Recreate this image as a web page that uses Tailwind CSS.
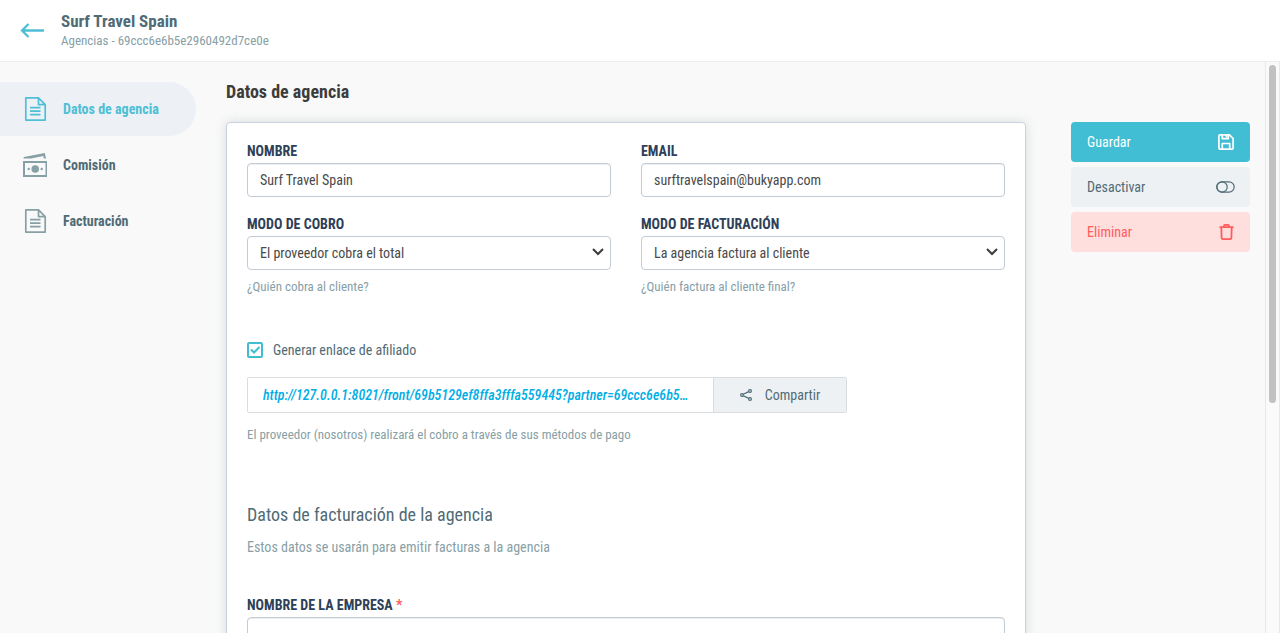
<!DOCTYPE html>
<html lang="es">
<head>
<meta charset="utf-8">
<meta name="viewport" content="width=device-width, initial-scale=1">
<title>Surf Travel Spain</title>
<script src="https://cdn.jsdelivr.net/npm/@tailwindcss/browser@4"></script>
</head>
<body class="flex h-screen flex-col overflow-hidden bg-[#f9f9f9] font-['Roboto_Condensed','Liberation_Sans_Narrow','Roboto',sans-serif] text-sm text-[#506b75]">
<header class="flex shrink-0 items-center gap-4 border-b border-[#ebedef] bg-white px-5 pt-[11px] pb-[10px]">
  <a href="#" aria-label="Volver">
    <svg class="h-6 w-[25px] text-[#4fbfd5]" viewBox="0 0 25 24" fill="none" stroke="currentColor" stroke-width="2.3"><path d="M24 11.500H2M8.500 5L2 11.500l6.500 6.500"/></svg>
  </a>
  <div>
    <h1 class="text-[17px] leading-5 font-bold">Surf Travel Spain</h1>
    <p class="text-[13px] leading-5 text-[#87a0a6]">Agencias - 69ccc6e6b5e2960492d7ce0e</p>
  </div>
</header>
<div class="flex min-h-0 flex-1">
  <nav class="flex w-[196px] shrink-0 flex-col gap-[2px] pt-5 font-bold">
    <a href="#" class="flex h-[54px] items-center gap-4 rounded-r-full bg-[#edf1f5] pl-[23px] text-[#4fbfd5]">
      <svg class="h-6 w-6" viewBox="0 0 24 24" fill="none" stroke="currentColor" stroke-width="1.700" stroke-linejoin="round"><path d="M2.800.9h12.700l6.700 6.700v15.500H2.800zM15.500.9v6.700h6.700M7 10.700h10.500M7 14.200h10.500M7 17.700h10.500"/></svg>
      Datos de agencia
    </a>
    <a href="#" class="flex h-[54px] items-center gap-4 pl-[23px]">
      <svg class="h-6 w-6 text-[#87a0a6]" viewBox="0 0 24 24" fill="none" stroke="currentColor"><path stroke-width="2" d="M1 9h22.500v14H1z"/><circle cx="12.200" cy="16" r="3.800" fill="currentColor" stroke="none"/><circle cx="5.700" cy="16" r="1.200" fill="currentColor" stroke="none"/><circle cx="18.700" cy="16" r="1.200" fill="currentColor" stroke="none"/><path fill="currentColor" stroke="none" d="M.3 5.400L1 4 21.800 0l1.200 5.400h-2.200l-.5-2.400L8 5.400z"/></svg>
      Comisión
    </a>
    <a href="#" class="flex h-[54px] items-center gap-4 pl-[23px]">
      <svg class="h-6 w-6 text-[#87a0a6]" viewBox="0 0 24 24" fill="none" stroke="currentColor" stroke-width="1.700" stroke-linejoin="round"><path d="M2.800.9h12.700l6.700 6.700v15.500H2.800zM15.500.9v6.700h6.700M7 10.700h10.500M7 14.200h10.500M7 17.700h10.500"/></svg>
      Facturación
    </a>
  </nav>
  <main class="flex min-w-0 flex-1 items-start gap-[45px] pt-5 pr-[15px] pl-[30px]">
    <section class="min-w-0 flex-1">
      <h2 class="mb-5 text-lg leading-5 font-bold text-[#3c3c3b]">Datos de agencia</h2>
      <form class="rounded border border-[#c8d3df] bg-white p-5 shadow-[0_0_12px_rgba(84,110,122,0.2)]">
        <div class="grid grid-cols-2 gap-x-[30px] gap-y-[19px]">
          <div>
            <label for="nombre" class="mb-1 block leading-4 font-bold text-[#2e4057]">NOMBRE</label>
            <input id="nombre" type="text" value="Surf Travel Spain" class="block h-[34px] w-full rounded border border-[#c3ccd5] bg-white px-3 text-[#4a4a4a] shadow-[inset_0_1px_1px_rgba(0,0,0,0.07)]">
          </div>
          <div>
            <label for="email" class="mb-1 block leading-4 font-bold text-[#2e4057]">EMAIL</label>
            <input id="email" type="email" value="surftravelspain@bukyapp.com" class="block h-[34px] w-full rounded border border-[#c3ccd5] bg-white px-3 text-[#4a4a4a] shadow-[inset_0_1px_1px_rgba(0,0,0,0.07)]">
          </div>
          <div>
            <label for="cobro" class="mb-1 block leading-4 font-bold text-[#2e4057]">MODO DE COBRO</label>
            <div class="relative">
              <select id="cobro" class="block h-[34px] w-full appearance-none rounded border border-[#c3ccd5] bg-white px-3 text-[#4a4a4a]"><option>El proveedor cobra el total</option></select>
              <svg class="pointer-events-none absolute top-3 right-[7px] h-2 w-3" viewBox="0 0 12 8" fill="none" stroke="#3c3c3b" stroke-width="2"><path d="M1 1l5 5 5-5"/></svg>
            </div>
            <p class="mt-2 text-[13px] leading-[18px] text-[#87a0a6]">¿Quién cobra al cliente?</p>
          </div>
          <div>
            <label for="facturacion" class="mb-1 block leading-4 font-bold text-[#2e4057]">MODO DE FACTURACIÓN</label>
            <div class="relative">
              <select id="facturacion" class="block h-[34px] w-full appearance-none rounded border border-[#c3ccd5] bg-white px-3 text-[#4a4a4a]"><option>La agencia factura al cliente</option></select>
              <svg class="pointer-events-none absolute top-3 right-[7px] h-2 w-3" viewBox="0 0 12 8" fill="none" stroke="#3c3c3b" stroke-width="2"><path d="M1 1l5 5 5-5"/></svg>
            </div>
            <p class="mt-2 text-[13px] leading-[18px] text-[#87a0a6]">¿Quién factura al cliente final?</p>
          </div>
        </div>
        <label for="afiliado" class="mt-11 flex items-center gap-[10px] leading-5">
          <span class="relative size-4">
            <input id="afiliado" type="checkbox" checked class="block size-4 appearance-none rounded-xs border-2 border-[#3fbed3] bg-white">
            <svg class="pointer-events-none absolute inset-0 size-4" viewBox="0 0 16 16" fill="none" stroke="#3fbed3" stroke-width="2"><path d="M4 7.500l3 3 5.500-5.500"/></svg>
          </span>
          Generar enlace de afiliado
        </label>
        <div class="mt-[17px] flex h-9 max-w-[600px] overflow-hidden rounded-xs border border-[#dadcde]">
          <div class="flex min-w-0 flex-1 items-center px-[15px]"><a href="#" class="truncate font-medium text-[#00aee6] italic">http://127.0.0.1:8021/front/69b5129ef8ffa3fffa559445?partner=69ccc6e6b5…</a></div>
          <button type="button" class="flex w-[133px] shrink-0 items-center justify-center gap-[13px] border-l border-[#dadcde] bg-[#edf1f4]">
            <svg class="h-3 w-3" viewBox="0 0 12 12" fill="none" stroke="currentColor" stroke-width="1.200"><circle cx="2" cy="6" r="1.400"/><circle cx="10" cy="2" r="1.400"/><circle cx="10" cy="10" r="1.400"/><path d="M3.300 5.300l5.400-2.700M3.300 6.700l5.400 2.700"/></svg>
            Compartir
          </button>
        </div>
        <p class="mt-3 text-[13px] leading-5 text-[#87a0a6]">El proveedor (nosotros) realizará el cobro a través de sus métodos de pago</p>
        <h3 class="mt-[58px] text-lg leading-6">Datos de facturación de la agencia</h3>
        <p class="mt-[10px] leading-5 text-[#87a0a6]">Estos datos se usarán para emitir facturas a la agencia</p>
        <label for="empresa" class="mt-10 mb-1 block leading-4 font-bold text-[#2e4057]">NOMBRE DE LA EMPRESA <span class="text-[#ff5c5c]">*</span></label>
        <input id="empresa" type="text" required class="block h-[34px] w-full rounded border border-[#c3ccd5] bg-white px-3 text-[#4a4a4a] shadow-[inset_0_1px_1px_rgba(0,0,0,0.07)]">
      </form>
    </section>
    <aside class="mt-10 flex w-[179px] shrink-0 flex-col gap-[5px]">
      <button type="button" class="flex h-10 items-center justify-between rounded bg-[#41bed3] px-4 text-white">Guardar
        <svg class="h-4 w-4" viewBox="0 0 16 16" fill="none" stroke="currentColor" stroke-width="1.700" stroke-linejoin="round"><path d="M2 .9h9.500l3.600 3.600V14a1.100 1.100 0 0 1-1.100 1.100H2A1.100 1.100 0 0 1 .9 14V2A1.100 1.100 0 0 1 2 .9zM4.300 1v3.700h6V1M4.300 15V9.500h7.400V15"/><path d="M8.500 1v2.500"/></svg>
      </button>
      <button type="button" class="flex h-10 items-center justify-between rounded bg-[#edf1f4] px-[15px] pl-4">Desactivar
        <svg class="h-3 w-[19px]" viewBox="0 0 19 12" fill="none" stroke="currentColor" stroke-width="1.200"><rect x=".8" y=".8" width="17.400" height="10.400" rx="5.200"/><circle cx="6" cy="6" r="5.200"/></svg>
      </button>
      <button type="button" class="flex h-10 items-center justify-between rounded bg-[#ffdede] px-4 text-[#ff5c5c]">Eliminar
        <svg class="h-4 w-[15px]" viewBox="0 0 15 16" fill="none" stroke="currentColor" stroke-width="1.800" stroke-linejoin="round"><path d="M.5 3.200h14M2.300 3.200l.3 10.700q.1 1.200 1.200 1.200h7.400q1.100 0 1.200-1.200l.3-10.700M5 3V1.900q0-1 1-1h3q1 0 1 1V3"/></svg>
      </button>
    </aside>
  </main>
  <div class="w-[15px] shrink-0 border-x border-[#e8e8e8] bg-[#fafafa] px-[3px] pt-[3px]">
    <div class="h-[338px] rounded-full bg-[#c1c1c1]"></div>
  </div>
</div>
</body>
</html>
